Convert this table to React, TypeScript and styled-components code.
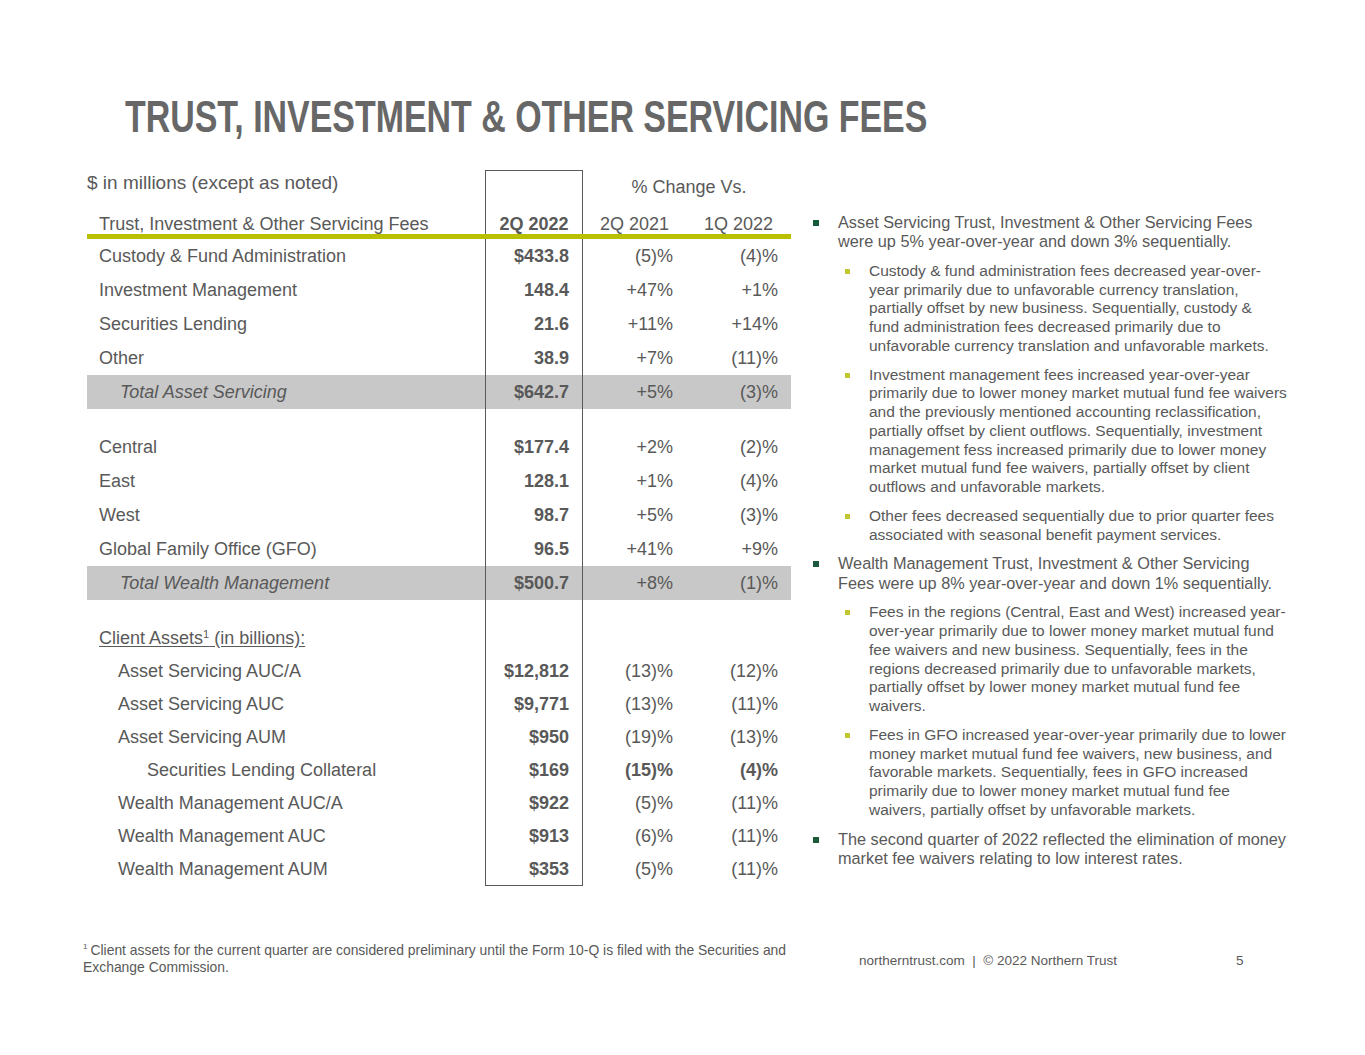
import React from "react";
import styled, { createGlobalStyle, css } from "styled-components";

const GlobalStyle = createGlobalStyle`
  html, body { margin: 0; padding: 0; background: #ffffff; }
  body { font-family: "Liberation Sans", Arial, sans-serif; color: #595959; }
`;

const Page = styled.div`
  width: 1365px;
  height: 1055px;
  box-sizing: border-box;
  padding-top: 95px;
  background: #ffffff;
  display: flex;
  flex-direction: column;
`;

const Title = styled.h1`
  margin: 0 0 0 125px;
  font-family: "Liberation Sans", Arial, sans-serif;
  font-weight: 700;
  font-size: 44px;
  line-height: 44px;
  color: #676767;
  white-space: nowrap;
  transform: scaleX(0.771);
  transform-origin: left center;
`;

const Main = styled.div`
  display: flex;
  margin-top: 31px;
`;

const Table = styled.div`
  margin-left: 87px;
  width: 704px;
  display: flex;
  flex-direction: column;
`;

const Row = styled.div<{ $h: number; $shade?: boolean; $align?: string }>`
  display: grid;
  grid-template-columns: 398px 98px 103px 105px;
  height: ${(p) => p.$h}px;
  background: ${(p) => (p.$shade ? "#c8c8c8" : "transparent")};
  align-items: ${(p) => p.$align || "center"};
  font-size: 18px;
  line-height: 20px;
`;

const Label = styled.div<{ $indent?: number; $italic?: boolean }>`
  padding-left: ${(p) => p.$indent ?? 12}px;
  font-style: ${(p) => (p.$italic ? "italic" : "normal")};
  white-space: nowrap;
`;

const BoxCell = styled.div<{ $top?: boolean; $bottom?: boolean; $center?: boolean }>`
  align-self: stretch;
  display: flex;
  align-items: inherit;
  justify-content: ${(p) => (p.$center ? "center" : "flex-end")};
  padding-right: ${(p) => (p.$center ? 0 : 13)}px;
  border-left: 1.5px solid #595959;
  border-right: 1.5px solid #595959;
  ${(p) => p.$top && css`border-top: 1.5px solid #595959;`}
  ${(p) => p.$bottom && css`border-bottom: 1.5px solid #595959;`}
  font-weight: 700;
  white-space: nowrap;
`;

const Num = styled.div<{ $bold?: boolean; $center?: boolean }>`
  text-align: ${(p) => (p.$center ? "center" : "right")};
  padding-right: ${(p) => (p.$center ? 0 : 13)}px;
  font-weight: ${(p) => (p.$bold ? 700 : 400)};
  white-space: nowrap;
`;

const Caption = styled.div`
  font-size: 19px;
  line-height: 22px;
  padding-top: 2px;
  white-space: nowrap;
`;

const ChangeCaption = styled.div`
  grid-column: 3 / span 2;
  text-align: center;
  padding-top: 7px;
  padding-left: 4px;
  white-space: nowrap;
`;

const GreenRule = styled.div`
  height: 5px;
  background: #b9c000;
`;

const Underlined = styled.span`
  text-decoration: underline;
  text-underline-offset: 2px;
  sup {
    font-size: 11px;
    line-height: 0;
    vertical-align: 6px;
  }
`;

const Notes = styled.div`
  margin-left: 21px;
  padding-top: 43px;
  display: flex;
  flex-direction: column;
  gap: 10.2px;
`;

const Bullet = styled.div<{ $sub?: boolean }>`
  position: relative;
  padding-left: ${(p) => (p.$sub ? 57 : 26)}px;
  font-size: ${(p) => (p.$sub ? 15.5 : 16.3)}px;
  line-height: ${(p) => (p.$sub ? 18.7 : 19.4)}px;
  color: #595959;
  &::before {
    content: "";
    position: absolute;
    left: ${(p) => (p.$sub ? 33 : 1)}px;
    top: 7px;
    width: ${(p) => (p.$sub ? 5 : 6)}px;
    height: ${(p) => (p.$sub ? 5 : 6)}px;
    background: ${(p) => (p.$sub ? "#c2c730" : "#1a5a3c")};
  }
`;

const Line = styled.span`
  display: block;
  white-space: nowrap;
`;

const Footer = styled.div`
  display: flex;
  align-items: center;
  margin-top: 56px;
  margin-left: 83px;
`;

const Footnote = styled.div`
  width: 776px;
  font-size: 13.9px;
  line-height: 17px;
  color: #595959;
  sup {
    font-size: 8px;
    line-height: 0;
    vertical-align: 6px;
    margin-right: 3px;
  }
`;

const FootLine = styled.span`
  display: block;
  white-space: nowrap;
`;

const FooterBrand = styled.div`
  width: 377px;
  padding-top: 3px;
  font-size: 13.5px;
  color: #595959;
  white-space: pre;
`;

const PageNum = styled.div`
  padding-top: 3px;
  font-size: 13.5px;
  color: #595959;
`;

type DataRow = {
  label: React.ReactNode;
  value: string;
  a: string;
  b: string;
  indent?: number;
  italic?: boolean;
  shade?: boolean;
  boldChange?: boolean;
};

const section1: DataRow[] = [
  { label: "Custody & Fund Administration", value: "$433.8", a: "(5)%", b: "(4)%" },
  { label: "Investment Management", value: "148.4", a: "+47%", b: "+1%" },
  { label: "Securities Lending", value: "21.6", a: "+11%", b: "+14%" },
  { label: "Other", value: "38.9", a: "+7%", b: "(11)%" },
  { label: "Total Asset Servicing", value: "$642.7", a: "+5%", b: "(3)%", indent: 33, italic: true, shade: true },
];

const section2: DataRow[] = [
  { label: "Central", value: "$177.4", a: "+2%", b: "(2)%" },
  { label: "East", value: "128.1", a: "+1%", b: "(4)%" },
  { label: "West", value: "98.7", a: "+5%", b: "(3)%" },
  { label: "Global Family Office (GFO)", value: "96.5", a: "+41%", b: "+9%" },
  { label: "Total Wealth Management", value: "$500.7", a: "+8%", b: "(1)%", indent: 33, italic: true, shade: true },
];

const section3: DataRow[] = [
  { label: "Asset Servicing AUC/A", value: "$12,812", a: "(13)%", b: "(12)%", indent: 31 },
  { label: "Asset Servicing AUC", value: "$9,771", a: "(13)%", b: "(11)%", indent: 31 },
  { label: "Asset Servicing AUM", value: "$950", a: "(19)%", b: "(13)%", indent: 31 },
  { label: "Securities Lending Collateral", value: "$169", a: "(15)%", b: "(4)%", indent: 60, boldChange: true },
  { label: "Wealth Management AUC/A", value: "$922", a: "(5)%", b: "(11)%", indent: 31 },
  { label: "Wealth Management AUC", value: "$913", a: "(6)%", b: "(11)%", indent: 31 },
  { label: "Wealth Management AUM", value: "$353", a: "(5)%", b: "(11)%", indent: 31 },
];

const notes: { sub?: boolean; lines: string[] }[] = [
  {
    lines: [
      "Asset Servicing Trust, Investment & Other Servicing Fees",
      "were up 5% year-over-year and down 3% sequentially.",
    ],
  },
  {
    sub: true,
    lines: [
      "Custody & fund administration fees decreased year-over-",
      "year primarily due to unfavorable currency translation,",
      "partially offset by new business. Sequentially, custody &",
      "fund administration fees decreased primarily due to",
      "unfavorable currency translation and unfavorable markets.",
    ],
  },
  {
    sub: true,
    lines: [
      "Investment management fees increased year-over-year",
      "primarily due to lower money market mutual fund fee waivers",
      "and the previously mentioned accounting reclassification,",
      "partially offset by client outflows. Sequentially, investment",
      "management fess increased primarily due to lower money",
      "market mutual fund fee waivers, partially offset by client",
      "outflows and unfavorable markets.",
    ],
  },
  {
    sub: true,
    lines: [
      "Other fees decreased sequentially due to prior quarter fees",
      "associated with seasonal benefit payment services.",
    ],
  },
  {
    lines: [
      "Wealth Management Trust, Investment & Other Servicing",
      "Fees were up 8% year-over-year and down 1% sequentially.",
    ],
  },
  {
    sub: true,
    lines: [
      "Fees in the regions (Central, East and West) increased year-",
      "over-year primarily due to lower money market mutual fund",
      "fee waivers and new business. Sequentially, fees in the",
      "regions decreased primarily due to unfavorable markets,",
      "partially offset by lower money market mutual fund fee",
      "waivers.",
    ],
  },
  {
    sub: true,
    lines: [
      "Fees in GFO increased year-over-year primarily due to lower",
      "money market mutual fund fee waivers, new business, and",
      "favorable markets. Sequentially, fees in GFO increased",
      "primarily due to lower money market mutual fund fee",
      "waivers, partially offset by unfavorable markets.",
    ],
  },
  {
    lines: [
      "The second quarter of 2022 reflected the elimination of money",
      "market fee waivers relating to low interest rates.",
    ],
  },
];

function renderRows(rows: DataRow[], h: number, lastBottom = false) {
  return rows.map((r, i) => (
    <Row key={String(r.label)} $h={lastBottom && i === rows.length - 1 ? h + 1 : h} $shade={r.shade}>
      <Label $indent={r.indent} $italic={r.italic}>{r.label}</Label>
      <BoxCell $bottom={lastBottom && i === rows.length - 1}>{r.value}</BoxCell>
      <Num $bold={r.boldChange}>{r.a}</Num>
      <Num $bold={r.boldChange}>{r.b}</Num>
    </Row>
  ));
}

export default function App() {
  return (
    <>
      <GlobalStyle />
      <Page>
        <Title>TRUST, INVESTMENT &amp; OTHER SERVICING FEES</Title>
        <Main>
          <Table>
            <Row $h={34} $align="start">
              <Caption>$ in millions (except as noted)</Caption>
              <BoxCell $top />
              <ChangeCaption>% Change Vs.</ChangeCaption>
            </Row>
            <Row $h={30} $align="end">
              <Label>Trust, Investment &amp; Other Servicing Fees</Label>
              <BoxCell $center>2Q 2022</BoxCell>
              <Num $center>2Q 2021</Num>
              <Num $center>1Q 2022</Num>
            </Row>
            <GreenRule />
            {renderRows(section1, 34)}
            <Row $h={21}>
              <div />
              <BoxCell />
            </Row>
            {renderRows(section2, 34)}
            <Row $h={21}>
              <div />
              <BoxCell />
            </Row>
            <Row $h={33}>
              <Label>
                <Underlined>
                  Client Assets<sup>1</sup> (in billions):
                </Underlined>
              </Label>
              <BoxCell />
            </Row>
            {renderRows(section3, 33, true)}
          </Table>
          <Notes>
            {notes.map((n, i) => (
              <Bullet key={i} $sub={n.sub}>
                {n.lines.map((l, j) => (
                  <Line key={j}>{l}</Line>
                ))}
              </Bullet>
            ))}
          </Notes>
        </Main>
        <Footer>
          <Footnote>
            <FootLine>
              <sup>1</sup>Client assets for the current quarter are considered preliminary until the Form 10-Q is filed with the Securities and
            </FootLine>
            <FootLine>Exchange Commission.</FootLine>
          </Footnote>
          <FooterBrand>{"northerntrust.com  |  © 2022 Northern Trust"}</FooterBrand>
          <PageNum>5</PageNum>
        </Footer>
      </Page>
    </>
  );
}
